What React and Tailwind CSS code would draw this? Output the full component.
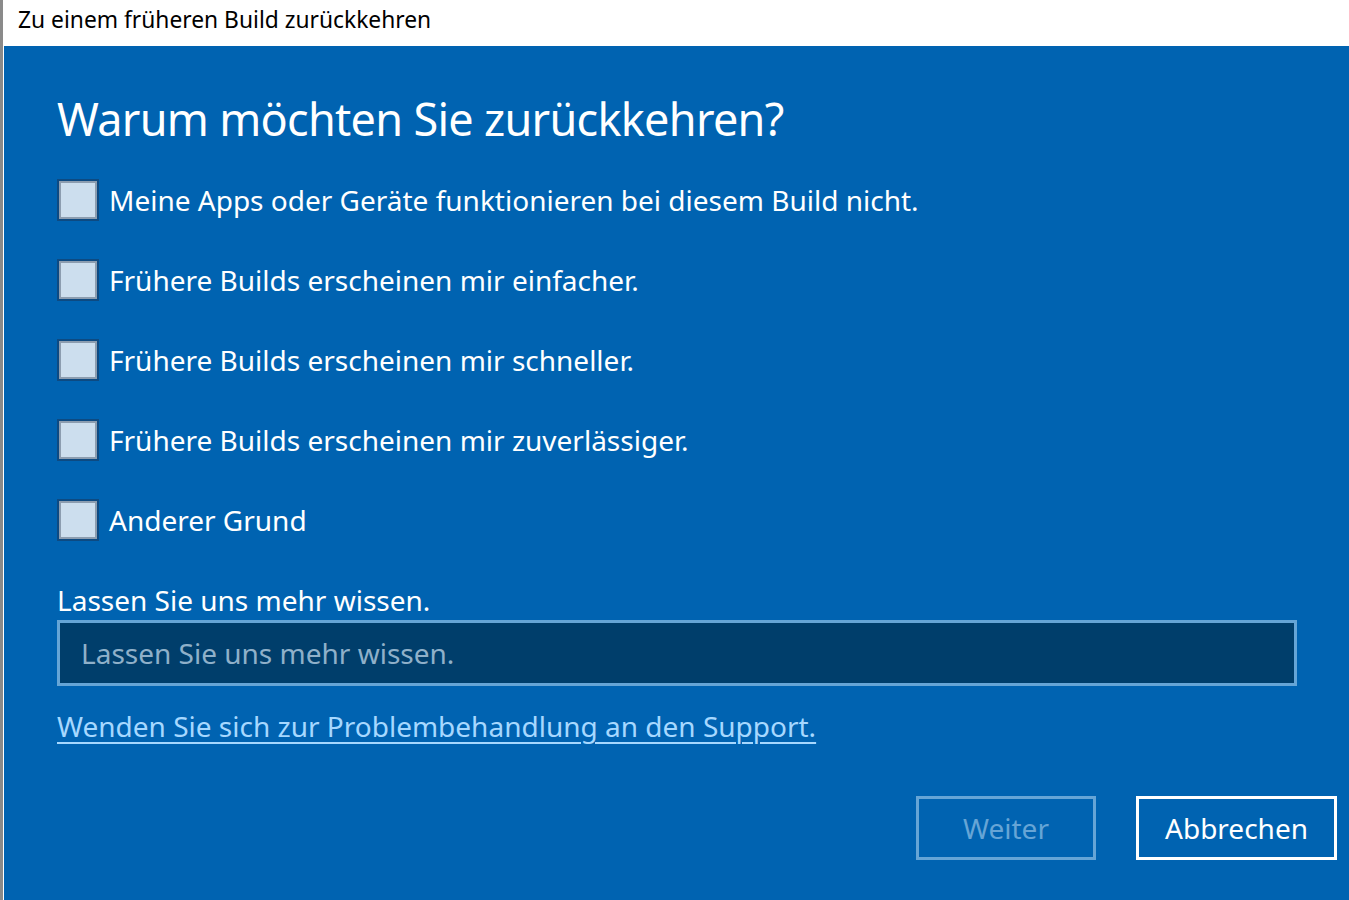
import React from 'react';

const reasons = [
    'Meine Apps oder Geräte funktionieren bei diesem Build nicht.',
    'Frühere Builds erscheinen mir einfacher.',
    'Frühere Builds erscheinen mir schneller.',
    'Frühere Builds erscheinen mir zuverlässiger.',
    'Anderer Grund',
];

const font = { fontFamily: '"Noto Sans", "Open Sans", sans-serif' };

const Checkbox = ({ label }) => (
    <label className="flex items-center h-[80px] cursor-pointer">
        <span className="w-[42px] h-[42px] shrink-0 border-2 border-[#0d4a82]">
            <span className="block w-full h-full border-2 border-[#8c9db0] bg-[#ccdeee]" />
        </span>
        <span className="ml-[10px] text-[28px] text-white leading-none">{label}</span>
    </label>
);

export default function App() {
    return (
        <div className="flex w-full h-[900px] overflow-hidden" style={font}>
            <div className="w-[3px] bg-[#8a8a8a] shrink-0" />
            <div className="w-px bg-white shrink-0" />
            <div className="flex-grow flex flex-col">
                <div className="h-[46px] bg-white flex items-center pl-[14px] pb-[6px]">
                    <span className="text-[22.8px] text-black">Zu einem früheren Build zurückkehren</span>
                </div>
                <div className="flex-grow bg-[#0063b1] pl-[53px] pr-[12px] flex flex-col">
                    <h1 className="mt-[38px] text-[45px] leading-[70px] tracking-[-0.7px] text-white font-normal">Warum möchten Sie zurückkehren?</h1>
                    <div className="mt-[6px] flex flex-col">
                        {reasons.map(r => <Checkbox key={r} label={r} />)}
                    </div>
                    <div className="mt-[22px] text-[28px] text-white leading-[36px]">Lassen Sie uns mehr wissen.</div>
                    <div className="mt-[2px] mr-[40px] h-[66px] border-[3px] border-[#66a5d6] bg-[#003e6b] flex items-center pl-[21px]">
                        <span className="text-[28px] text-[#8fb0c9]">Lassen Sie uns mehr wissen.</span>
                    </div>
                    <a className="mt-[20px] self-start text-[28px] text-[#a6d8ff] underline underline-offset-[5px] decoration-2 leading-[40px]">Wenden Sie sich zur Problembehandlung an den Support.</a>
                    <div className="mt-[50px] flex justify-end gap-[40px]">
                        <button className="w-[180px] h-[64px] border-[3px] border-[#66a5d6] text-[28px] text-[#66a5d6]">Weiter</button>
                        <button className="w-[201px] h-[64px] border-[3px] border-white text-[28px] text-white">Abbrechen</button>
                    </div>
                </div>
            </div>
        </div>
    );
}
